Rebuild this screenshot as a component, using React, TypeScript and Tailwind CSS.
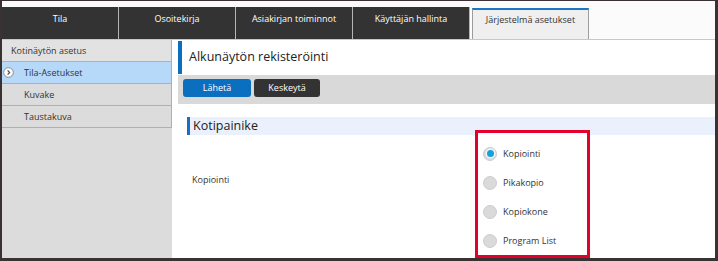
import React from 'react';

const tabs = ['Tila', 'Osoitekirja', 'Asiakirjan toiminnot', 'Käyttäjän hallinta'];
const menuItems = ['Kuvake', 'Taustakuva'];
const options = ['Kopiointi', 'Pikakopio', 'Kopiokone', 'Program List'];

// small circled chevron shown in front of the selected menu row
const ArrowIcon: React.FC = () => (
  <svg width="11" height="11" viewBox="0 0 11 11">
    <circle cx="5.5" cy="5.5" r="4.8" fill="#fff" stroke="#8a8a8a" strokeWidth="1" />
    <path d="M4.6 3.4 L6.6 5.5 L4.6 7.6" fill="none" stroke="#555" strokeWidth="1.3" />
  </svg>
);

const Radio: React.FC<{ checked?: boolean }> = ({ checked }) => (
  <span className="w-[14px] h-[14px] rounded-full bg-[#dadada] border border-[#cdcdcd] flex items-center justify-center">
    {checked && (
      <span className="w-[7px] h-[7px] rounded-full bg-[#12a3dc] shadow-[0_0_0_1.5px_#f4f4f4]" />
    )}
  </span>
);

export default function App() {
  return (
    <div className="relative w-[718px] h-[261px] overflow-hidden bg-white border-[#3a3232] border-t border-l-2 border-r-[3px] border-b-[3px] font-['Open_Sans',sans-serif] text-[#333] flex flex-col">
      {/* Tabs */}
      <div className="h-[39px] shrink-0 flex items-end border-b border-[#c8c8c8] bg-[#fbfbfb]">
        {tabs.map(tab => (
          <div
            key={tab}
            className="w-[117px] h-[32px] bg-[#333] border-r border-[#b5b5b5] text-white text-[9px] leading-[12px] text-center pt-[6px]"
          >
            {tab}
          </div>
        ))}
        <div className="ml-[2px] w-[117px] h-[31px] bg-[#efefef] border-t-2 border-t-[#1c74c6] border-x border-x-[#9c9c9c] text-[9px] leading-[12px] text-center pt-[4px]">
          Järjestelmä asetukset
        </div>
      </div>

      <div className="flex-1 flex">
        {/* Sidebar */}
        <div className="w-[170px] bg-[#dcdcdc] text-[9px]">
          <div className="h-[22px] bg-[#e2e2e2] border-b border-r border-[#b0b0b0] pl-[9px] flex items-center">
            Kotinäytön asetus
          </div>
          <div className="h-[22px] bg-[#b6d9fa] border-b border-r border-[#b0b0b0] pl-[1px] flex items-center">
            <ArrowIcon />
            <span className="ml-[10px]">Tila-Asetukset</span>
          </div>
          {menuItems.map(item => (
            <div key={item} className="h-[22px] border-b border-r border-[#b0b0b0] pl-[22px] flex items-center">
              {item}
            </div>
          ))}
        </div>

        {/* Main */}
        <div className="flex-1 pl-[6px] pt-[1px]">
          <div className="h-[33px] border-l-4 border-[#0b6fbf] pl-[7px] flex items-center text-[12.5px] text-[#222]">
            Alkunäytön rekisteröinti
          </div>
          <div className="mt-[1px] h-[29px] bg-[#d9d9d9] flex items-start gap-[3px] pl-[5px] pt-[4px]">
            <button className="w-[68px] h-[18px] rounded-[3px] bg-[#0b6fbf] text-white text-[9px]">Lähetä</button>
            <button className="w-[66px] h-[18px] rounded-[3px] bg-[#333] text-white text-[9px]">Keskeytä</button>
          </div>

          <div className="mt-[13px] ml-[9px] h-[18px] border-l-[3px] border-[#1a6fc4] bg-[#eaf1fc] pl-[3px] flex items-center text-[12.5px] text-[#222]">
            Kotipainike
          </div>

          <div className="mt-[4px] ml-[14px] flex text-[9px]">
            <div className="w-[291px] pt-[35px] leading-[12px]">Kopiointi</div>
            <div className="relative z-10 flex flex-col">
              {options.map((opt, i) => (
                <label key={opt} className="h-[29px] flex items-center gap-[6px]">
                  <Radio checked={i === 0} />
                  <span>{opt}</span>
                </label>
              ))}
            </div>
          </div>
        </div>
      </div>

      {/* red highlight frame */}
      <div className="absolute left-[473px] top-[129px] w-[115px] h-[128px] border-[3px] border-[#e3002b] bg-white" />
    </div>
  );
}
